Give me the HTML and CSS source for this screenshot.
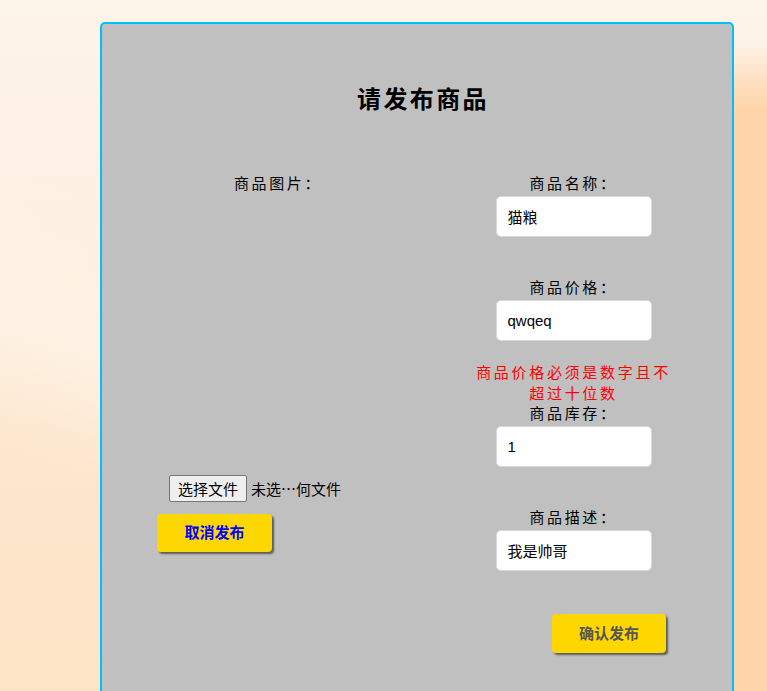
FILE: index.html
```html
<!DOCTYPE html>
<html lang="zh-CN">
<head>
<meta charset="utf-8">
<title>发布商品</title>
<link rel="stylesheet" href="styles.css">
</head>
<body>
<div class="card">
  <h1 class="title">请发布商品</h1>
  <div class="form">
    <div class="col-left">
      <div class="label label-img">商品图片：</div>
      <div class="file-row">
        <button class="file-btn" type="button">选择文件</button>
        <span class="file-name">未选…何文件</span>
      </div>
      <button class="btn btn-cancel" type="button">取消发布</button>
    </div>
    <div class="col-right">
      <div class="label">商品名称：</div>
      <input class="field" type="text" value="猫粮">
      <div class="label gap">商品价格：</div>
      <input class="field" type="text" value="qwqeq">
      <div class="error">商品价格必须是数字且不超过十位数</div>
      <div class="label">商品库存：</div>
      <input class="field" type="text" value="1">
      <div class="label gap">商品描述：</div>
      <input class="field" type="text" value="我是帅哥">
      <button class="btn btn-confirm" type="button">确认发布</button>
    </div>
  </div>
</div>
</body>
</html>
```
FILE: styles.css
```css
html, body {
  margin: 0;
  padding: 0;
  height: 691px;
  overflow: hidden;
}
body {
  font-family: "Noto Sans CJK SC", sans-serif;
  background:
    linear-gradient(180deg, rgba(254, 212, 169, 0) 40px, rgba(254, 212, 169, 1) 110px) right top / 90px 100% no-repeat,
    radial-gradient(ellipse 300px 500px at 100% 60%, rgba(254, 210, 165, 0.9), rgba(254, 210, 165, 0) 70%),
    linear-gradient(200deg, rgba(255,255,255,0) 45%, rgba(254, 244, 232, 0.8) 60%, rgba(255,255,255,0) 75%),
    linear-gradient(180deg, #fdf4ea 0%, #fdefe2 30%, #fde6cd 62%, #fde3c6 100%);
}
.card {
  margin: 22px 0 0 100px;
  width: 630px;
  height: 720px;
  background: #c0c0c0;
  border: 2px solid #00bfff;
  border-radius: 5px;
  padding-top: 57px;
  box-sizing: content-box;
}
.title {
  margin: 0;
  padding-left: 12px;
  font-size: 24px;
  line-height: 34px;
  font-weight: bold;
  text-align: center;
  letter-spacing: 2.4px;
  color: #000;
}
.form {
  display: grid;
  grid-template-columns: 313px 317px;
  margin-top: 58px;
}
.col-left {
  display: flex;
  flex-direction: column;
  align-items: flex-start;
}
.col-right {
  display: flex;
  flex-direction: column;
  align-items: center;
}
.label {
  font-size: 15px;
  line-height: 19px;
  height: 23px;
  letter-spacing: 2.6px;
  color: #000;
}
.label-img {
  margin-left: 132px;
}
.label.gap {
  margin-top: 40px;
}
.field {
  width: 156px;
  height: 41px;
  box-sizing: border-box;
  border: 1px solid #d8d8d8;
  border-radius: 5px;
  background: #fff;
  padding: 0 11px;
  font-family: "Liberation Sans", "Noto Sans CJK SC", sans-serif;
  font-size: 15px;
  color: #000;
  outline: none;
}
.error {
  margin-top: 20px;
  width: 200px;
  font-size: 15px;
  line-height: 21px;
  letter-spacing: 2.7px;
  text-align: center;
  color: #ff0000;
}
.file-row {
  margin-top: 279px;
  margin-left: 67px;
  display: flex;
  align-items: center;
}
.file-btn {
  width: 78px;
  height: 27px;
  padding: 0;
  background: #efefef;
  border: 1px solid #767676;
  border-radius: 2px;
  font-family: "Noto Sans CJK SC", sans-serif;
  font-size: 15px;
  line-height: 25px;
  color: #000;
}
.file-name {
  margin-left: 4px;
  font-size: 15px;
  line-height: 20px;
  color: #000;
}
.btn {
  border: none;
  background: #ffd700;
  border-radius: 4px;
  box-shadow: 2px 2px 2px #5a5a5a;
  font-family: "Noto Sans CJK SC", sans-serif;
  font-size: 15px;
  font-weight: bold;
  padding: 0 0 3px 0;
}
.btn-cancel {
  margin-top: 12px;
  margin-left: 55px;
  width: 115px;
  height: 38px;
  color: #0000ff;
}
.btn-confirm {
  margin-top: 43px;
  align-self: flex-end;
  margin-right: 66px;
  width: 114px;
  height: 39px;
  color: #555;
}
```
